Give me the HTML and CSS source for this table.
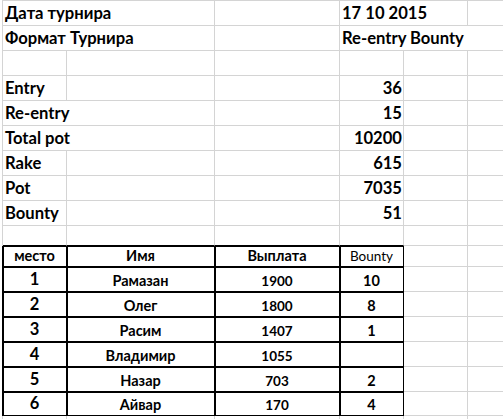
FILE: index.html
```html
<!DOCTYPE html>
<html lang="ru">
<head>
<meta charset="utf-8">
<title>Турнир</title>
<link rel="stylesheet" href="styles.css">
</head>
<body>
<div class="sheet">
  <!-- row 1 -->
  <div class="c span2 lbl">Дата турнира</div>
  <div class="c"></div>
  <div class="c span2 txt">17 10 2015</div>
  <div class="c f"></div>
  <!-- row 2 -->
  <div class="c span2 lbl">Формат Турнира</div>
  <div class="c"></div>
  <div class="c span3 f txt">Re-entry Bounty</div>
  <!-- row 3 -->
  <div class="c"></div><div class="c"></div><div class="c"></div><div class="c"></div><div class="c"></div><div class="c f"></div>
  <!-- row 4 -->
  <div class="c lbl">Entry</div><div class="c"></div><div class="c"></div><div class="c num">36</div><div class="c"></div><div class="c f"></div>
  <!-- row 5 -->
  <div class="c span2 lbl">Re-entry</div><div class="c"></div><div class="c num">15</div><div class="c"></div><div class="c f"></div>
  <!-- row 6 -->
  <div class="c span2 lbl">Total pot</div><div class="c"></div><div class="c num">10200</div><div class="c"></div><div class="c f"></div>
  <!-- row 7 -->
  <div class="c lbl">Rake</div><div class="c"></div><div class="c"></div><div class="c num">615</div><div class="c"></div><div class="c f"></div>
  <!-- row 8 -->
  <div class="c lbl">Pot</div><div class="c"></div><div class="c"></div><div class="c num">7035</div><div class="c"></div><div class="c f"></div>
  <!-- row 9 -->
  <div class="c lbl">Bounty</div><div class="c"></div><div class="c"></div><div class="c num">51</div><div class="c"></div><div class="c f"></div>
  <!-- row 10 -->
  <div class="c above"></div><div class="c above"></div><div class="c above"></div><div class="c above"></div><div class="c"></div><div class="c f"></div>
  <!-- header -->
  <div class="c t first hd">место</div>
  <div class="c t hd">Имя</div>
  <div class="c t hd">Выплата</div>
  <div class="c t hd reg">Bounty</div>
  <div class="c"></div><div class="c f"></div>
  <!-- rows -->
  <div class="c t first place">1</div><div class="c t name">Рамазан</div><div class="c t pay">1900</div><div class="c t bty">10</div><div class="c"></div><div class="c f"></div>
  <div class="c t first place">2</div><div class="c t name">Олег</div><div class="c t pay">1800</div><div class="c t bty">8</div><div class="c"></div><div class="c f"></div>
  <div class="c t first place">3</div><div class="c t name">Расим</div><div class="c t pay">1407</div><div class="c t bty">1</div><div class="c"></div><div class="c f"></div>
  <div class="c t first place">4</div><div class="c t name">Владимир</div><div class="c t pay">1055</div><div class="c t bty"></div><div class="c"></div><div class="c f"></div>
  <div class="c t first place">5</div><div class="c t name">Назар</div><div class="c t pay">703</div><div class="c t bty">2</div><div class="c"></div><div class="c f"></div>
  <div class="c t first place">6</div><div class="c t name">Айвар</div><div class="c t pay">170</div><div class="c t bty">4</div><div class="c"></div><div class="c f"></div>
  <!-- below -->
  <div class="c end"></div><div class="c end"></div><div class="c end"></div><div class="c end"></div><div class="c end"></div><div class="c end f"></div>
</div>
</body>
</html>
```

FILE: styles.css
```css
html, body {
  margin: 0;
  padding: 0;
  background: #ffffff;
  overflow: hidden;
}

body {
  width: 503px;
  height: 419px;
  font-family: Lato, "Noto Sans", "DejaVu Sans", sans-serif;
  color: #000000;
}

.sheet {
  margin-left: 2px;
  border-left: 1px solid #d4d4d4;
  border-top: 1px solid #d4d4d4;
  display: grid;
  grid-template-columns: 64px 148px 125px 64px 64px 35px;
  grid-template-rows: repeat(9, 25px) 20px 21px repeat(5, 25px) 24px 3px;
  width: 500px;
}

.c {
  box-sizing: border-box;
  border-right: 1px solid #d4d4d4;
  border-bottom: 1px solid #d4d4d4;
  display: flex;
  align-items: flex-end;
  line-height: 1;
  white-space: nowrap;
  overflow: hidden;
  min-width: 0;
}

.f {
  border-right: none;
}

.end {
  border-bottom: none;
}

.span2 { grid-column: span 2; }
.span3 { grid-column: span 3; }

.lbl,
.txt {
  font-weight: 700;
  font-size: 16.6px;
  padding: 0 0 3px 2px;
}

.num {
  font-weight: 700;
  font-size: 16.6px;
  justify-content: flex-end;
  padding: 0 1px 3px 0;
}

.above {
  border-bottom-color: #000000;
}

.t {
  border-right-color: #000000;
  border-bottom-color: #000000;
  box-shadow: inset 1px 1px 0 #000000;
  justify-content: center;
  font-weight: 700;
}

.first {
  box-shadow: inset 1px 1px 0 #000000, -1px 0 0 #000000;
}

.hd {
  font-size: 14.5px;
  padding-bottom: 3px;
}

.reg {
  font-weight: 400;
  font-size: 13.5px;
}

.place {
  font-size: 16.5px;
  padding-bottom: 4px;
}

.name {
  font-size: 14.5px;
  padding-bottom: 3px;
}

.pay {
  font-size: 13.5px;
  padding-bottom: 3px;
}

.bty {
  font-size: 14.5px;
  padding-bottom: 3px;
}
```
